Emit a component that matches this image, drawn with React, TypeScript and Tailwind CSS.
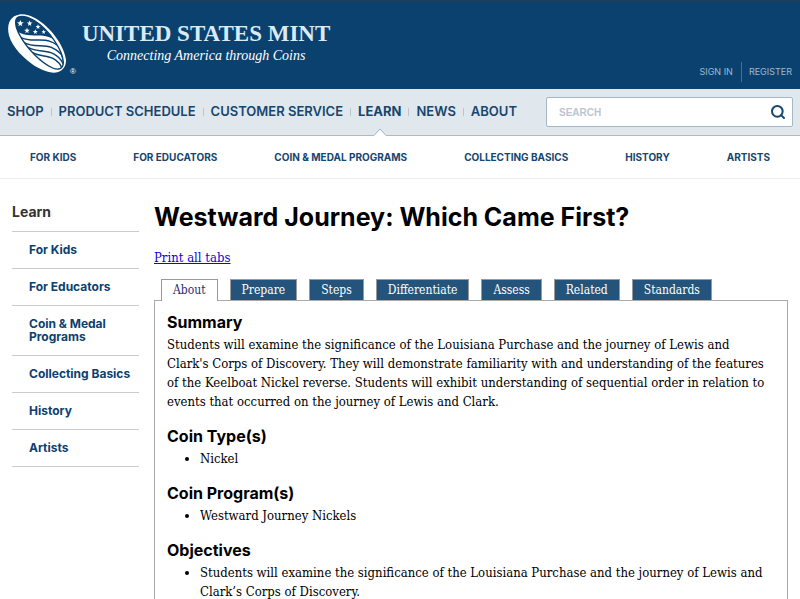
import { useState } from "react";
import { Search } from "lucide-react";
import { twMerge } from "tailwind-merge";

const cn = twMerge;

const mainLinks = ["Shop", "Product Schedule", "Customer Service", "Learn", "News", "About"];

const learnLinks = ["For Kids", "For Educators", "Coin & Medal Programs", "Collecting Basics", "History", "Artists"];

const tabs = ["About", "Prepare", "Steps", "Differentiate", "Assess", "Related", "Standards"];

const sections = [
  { title: "Coin Type(s)", items: ["Nickel"] },
  { title: "Coin Program(s)", items: ["Westward Journey Nickels"] },
  {
    title: "Objectives",
    items: [
      "Students will examine the significance of the Louisiana Purchase and the journey of Lewis and Clark’s Corps of Discovery.",
    ],
  },
];

const FACE = "M56 27 C42 32 45 56 60 83 C80 120 122 164 158 180 C174 187 190 184 190 162 C188 126 148 66 103 38 C84 27 68 23 56 27 Z";
const STAR = "M0 -10 L3 -3 L10 -3 L4 2 L6 9 L0 5 L-6 9 L-4 2 L-10 -3 L-3 -3 Z";

function CoinLogo() {
  return (
    <svg viewBox="0 0 240 216" className="h-[72px] w-20 shrink-0" aria-hidden="true">
      <clipPath id="coin-face">
        <path d={FACE} />
      </clipPath>
      <path
        d="M56 20 C34 24 22 42 25 72 C28 104 60 142 96 168 C126 190 162 200 180 190 C192 182 198 172 198 156 C194 116 152 56 106 31 C88 21 70 17 56 20 Z"
        fill="#fff"
      />
      <path d={FACE} fill="#0b416f" />
      {/* flag stripes */}
      <g clipPath="url(#coin-face)">
        <path d="M50 70 C78 88 104 80 134 84 C152 87 164 94 174 106 L196 190 L150 190 L60 110 Z" fill="#fff" />
        <g fill="none" stroke="#0b416f" strokeWidth="4.5">
          <path d="M62 88 C92 104 122 90 150 100 C168 106 178 114 186 128" />
          <path d="M72 104 C100 120 130 108 154 118 C172 126 184 136 192 150" />
          <path d="M84 118 C110 132 136 126 158 136 C174 144 184 154 190 168" />
          <path d="M98 134 C120 146 142 142 160 152 C174 160 182 168 186 182" />
        </g>
      </g>
      <path d={FACE} fill="none" stroke="#0b416f" strokeWidth="4" />
      <g fill="#fff">
        <path d={STAR} transform="translate(61 46)" />
        <path d={STAR} transform="translate(89 46) scale(.85)" />
        <path d={STAR} transform="translate(114 56) scale(.75)" />
        <path d={STAR} transform="translate(81 68) scale(.85)" />
        <path d={STAR} transform="translate(106 71) scale(.75)" />
        <path d={STAR} transform="translate(131 72) scale(.65)" />
      </g>
    </svg>
  );
}

function Header() {
  return (
    <header className="flex h-[89px] items-start justify-between border-t-2 border-[#1b3f5c] bg-[#0b416f]">
      <a href="#home" className="flex pt-[6px] text-white">
        <CoinLogo />
        <span className="-ml-[10px] self-end pb-[2px] font-['Liberation_Sans'] text-[8px] leading-3">®</span>
        <span className="ml-[6px] pt-[14px] font-['Liberation_Serif',serif]">
          <span className="block text-[23px] leading-6 font-bold text-[#dceaf2]">UNITED STATES MINT</span>
          <span className="block text-center text-sm leading-5 italic">Connecting America through Coins</span>
        </span>
      </a>
      <nav aria-label="Account" className="flex self-end pr-2 pb-[7px] font-['Inter',sans-serif] text-[9px] leading-5 text-[#9dbad0] uppercase">
        <a href="#signin" className="border-r border-[#47708f] pr-2">Sign In</a>
        <a href="#register" className="pl-[7px]">Register</a>
      </nav>
    </header>
  );
}

function MainNav() {
  return (
    <div className="flex h-[47px] justify-between border-b border-[#a9bac9] bg-[#e1e8ed] px-[7px]">
      <nav aria-label="Main" className="font-['Inter',sans-serif] text-[13px] text-[#15466f] uppercase">
        <ul className="flex h-full items-center">
          {mainLinks.map((name) => (
            <li key={name} className="group relative flex h-full items-center">
              <a href="#nav" className={name === "Learn" ? "font-bold" : "font-semibold"}>{name}</a>
              <span className="mx-[7px] h-2 w-px bg-[#b9c6d1] group-last:hidden" />
              {name === "Learn" && (
                <svg viewBox="0 0 12 8" className="absolute -bottom-px left-4 h-2 w-3" aria-hidden="true">
                  <path d="M0 7.5 L6 1 L12 7.5 V8 H0 Z" fill="#fff" />
                  <path d="M0 7.5 L6 1 L12 7.5" fill="none" stroke="#a1b1c1" />
                </svg>
              )}
            </li>
          ))}
        </ul>
      </nav>
      <form className="my-2 flex h-[30px] w-[247px] items-center rounded-[2px] border border-[#a3b8c8] bg-white pr-[6px] pl-3">
        <input
          type="search"
          aria-label="Search"
          placeholder="SEARCH"
          className="min-w-0 flex-1 font-['Liberation_Sans',sans-serif] text-[10px] font-bold outline-none placeholder:text-[#bcc6cf]"
        />
        <button type="button" aria-label="Submit search" className="text-[#15466f]">
          <Search size={16} strokeWidth={3} />
        </button>
      </form>
    </div>
  );
}

function SubNav() {
  return (
    <nav aria-label="Learn" className="h-[43px] border-b border-[#eeeeee] px-[30px] font-['Inter',sans-serif] text-[10px] font-bold text-[#15466f] uppercase">
      <ul className="flex h-full items-center justify-between">
        {learnLinks.map((name) => (
          <li key={name}>
            <a href="#learn">{name}</a>
          </li>
        ))}
      </ul>
    </nav>
  );
}

function Sidebar() {
  return (
    <aside className="w-[127px] shrink-0 pt-[22px] font-['Inter',sans-serif]">
      <h2 className="pb-[9px] text-sm leading-[21px] font-bold text-[#333333]">Learn</h2>
      <ul className="border-t border-[#cccccc]">
        {learnLinks.map((name) => (
          <li key={name} className="border-b border-[#cccccc] pt-[11px] pb-3 pl-[17px] text-[12px] leading-[13px] font-bold text-[#0b416f]">
            <a href="#learn">{name}</a>
          </li>
        ))}
      </ul>
    </aside>
  );
}

const headingClass = "font-['Inter',sans-serif] text-base leading-[26px] font-bold";

export default function App() {
  const [active, setActive] = useState("About");

  return (
    <div className="h-screen overflow-hidden bg-white text-black">
      <Header />
      <MainNav />
      <SubNav />
      <div className="flex gap-[15px] px-3">
        <Sidebar />
        <main className="min-w-0 flex-1 font-['DejaVu_Serif_Condensed','DejaVu_Serif',serif] text-[13px] leading-[19px]">
          <h1 className="pt-[22px] font-['Inter',sans-serif] text-[25px] leading-8 font-bold">
            Westward Journey: Which Came First?
          </h1>
          <p className="pt-[15px]">
            <a href="#print" className="text-[#1500e0] underline">Print all tabs</a>
          </p>
          <div role="tablist" aria-label="Lesson plan" className="relative flex gap-3 px-[7px] pt-3">
            {tabs.map((name) => (
              <button
                key={name}
                role="tab"
                aria-selected={name === active}
                onClick={() => setActive(name)}
                className={cn(
                  "h-[21px] border border-b-0 border-[#999999] bg-[#24547c] px-[11px] text-[12px] text-white",
                  name === active && "-mb-px h-[22px] bg-white text-[#1f2f6b]"
                )}
              >
                {name}
              </button>
            ))}
          </div>
          <div role="tabpanel" className="border border-[#aaaaaa] pt-2 pr-4 pl-3">
            <section className="mb-3">
              <h2 className={headingClass}>Summary</h2>
              <p>
                Students will examine the significance of the Louisiana Purchase and the journey of Lewis and Clark's
                Corps of Discovery. They will demonstrate familiarity with and understanding of the features of the
                Keelboat Nickel reverse. Students will exhibit understanding of sequential order in relation to events
                that occurred on the journey of Lewis and Clark.
              </p>
            </section>
            {sections.map((section) => (
              <section key={section.title} className="mb-3">
                <h2 className={headingClass}>{section.title}</h2>
                <ul className="list-disc pl-[33px]">
                  {section.items.map((item) => (
                    <li key={item}>{item}</li>
                  ))}
                </ul>
              </section>
            ))}
          </div>
        </main>
      </div>
    </div>
  );
}
